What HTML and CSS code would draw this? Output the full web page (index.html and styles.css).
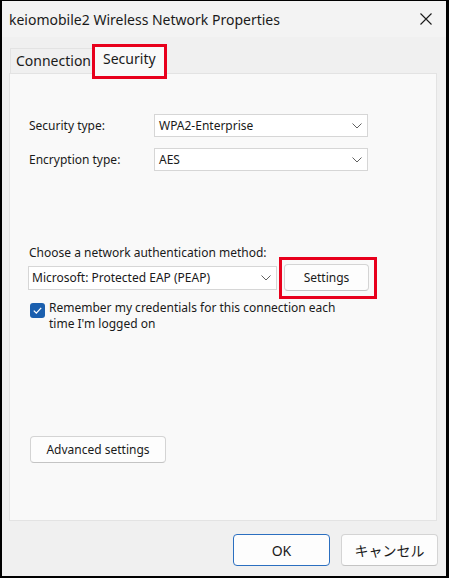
FILE: index.html
```html
<!DOCTYPE html>
<html>
<head>
<meta charset="utf-8">
<link rel="stylesheet" href="styles.css">
</head>
<body>
<div class="window">
  <div class="titlebar">
    <span class="title">keiomobile2 Wireless Network Properties</span>
    <svg class="close" width="12" height="12" viewBox="0 0 12 12"><path d="M0.5 0.5 L11.5 11.5 M11.5 0.5 L0.5 11.5" stroke="#1a1a1a" stroke-width="1.1" fill="none"/></svg>
  </div>
  <div class="tabs">
    <div class="tab">Connection</div>
    <div class="tab active">Security<span class="mark mark-tab"></span></div>
  </div>
  <div class="panel">
    <div class="row first">
      <span class="label">Security type:</span>
      <div class="select wide"><span>WPA2-Enterprise</span><svg class="chev" width="10" height="6" viewBox="0 0 10 6"><path d="M0.5 0.5 L5 5 L9.5 0.5" stroke="#606060" stroke-width="1" fill="none"/></svg></div>
    </div>
    <div class="row">
      <span class="label">Encryption type:</span>
      <div class="select wide"><span>AES</span><svg class="chev" width="10" height="6" viewBox="0 0 10 6"><path d="M0.5 0.5 L5 5 L9.5 0.5" stroke="#606060" stroke-width="1" fill="none"/></svg></div>
    </div>
    <div class="auth-label">Choose a network authentication method:</div>
    <div class="auth-row">
      <div class="select method"><span>Microsoft: Protected EAP (PEAP)</span><svg class="chev" width="10" height="6" viewBox="0 0 10 6"><path d="M0.5 0.5 L5 5 L9.5 0.5" stroke="#606060" stroke-width="1" fill="none"/></svg></div>
      <div class="btn settings">Settings<span class="mark mark-btn"></span></div>
    </div>
    <div class="check-row">
      <span class="checkbox"><svg width="15" height="15" viewBox="0 0 15 15"><path d="M3.8 7.6 L6.3 10.1 L11.2 4.9" stroke="#fff" stroke-width="1.3" fill="none"/></svg></span>
      <span class="check-text">Remember my credentials for this connection each time I'm logged on</span>
    </div>
    <div class="btn advanced">Advanced settings</div>
  </div>
  <div class="footer">
    <div class="btn dlg ok">OK</div>
    <div class="btn dlg">キャンセル</div>
  </div>
</div>
</body>
</html>
```
FILE: styles.css
```css
html, body {
  margin: 0;
  padding: 0;
  background: #000;
}
body {
  width: 449px;
  height: 578px;
  overflow: hidden;
  font-family: "Noto Sans", "Noto Sans CJK JP", sans-serif;
  font-size: 12px;
  color: #1a1a1a;
}
.window {
  margin: 1px 0 0 2px;
  width: 444px;
  height: 575px;
  background: #f0f0f0;
  display: flex;
  flex-direction: column;
}
.titlebar {
  height: 36px;
  display: flex;
  align-items: center;
  justify-content: space-between;
  padding: 0 14px 0 7px;
  background: #f3f3f3;
}
.title {
  font-size: 14px;
  color: #1a1a1a;
}
.tabs {
  height: 36px;
  display: flex;
  align-items: flex-end;
  padding-left: 8px;
}
.tab {
  position: relative;
  height: 24px;
  padding: 0 6px 0 5px;
  border: 1px solid #e3e3e3;
  border-bottom: none;
  background: #f0f0f0;
  font-size: 14px;
  line-height: 24px;
}
.tab.active {
  height: 29px;
  line-height: 27px;
  background: #f9f9f9;
  padding: 0 8px;
  margin-left: -4px;
  margin-bottom: -1px;
  z-index: 2;
}
.mark {
  position: absolute;
  border: 3px solid #e8001c;
  pointer-events: none;
}
.mark-tab {
  left: -3px;
  top: -1px;
  width: 69px;
  height: 29px;
}
.mark-btn {
  left: -6px;
  top: -8px;
  width: 92px;
  height: 36px;
}
.panel {
  margin: 0 9px 0 7px;
  height: 446px;
  background: #f9f9f9;
  border: 1px solid #e3e3e3;
  padding: 0 0 0 19px;
  display: flex;
  flex-direction: column;
}
.row {
  display: flex;
  align-items: center;
  margin-top: 11px;
}
.row.first {
  margin-top: 40px;
}
.label {
  width: 125px;
}
.select {
  height: 21px;
  border: 1px solid #d6d6d6;
  background: #fff;
  display: flex;
  align-items: center;
  justify-content: space-between;
  padding: 0 5px 0 4px;
}
.select.wide {
  width: 203px;
}
.auth-label {
  margin-top: 74px;
  height: 16px;
  line-height: 16px;
}
.auth-row {
  display: flex;
  align-items: center;
  margin-top: 3px;
  margin-left: -1px;
}
.select.method {
  width: 239px;
  height: 22px;
  padding: 0 5px 0 3px;
}
.btn {
  position: relative;
  background: #fdfdfd;
  border: 1px solid #d4d4d4;
  border-bottom-color: #c4c4c4;
  border-radius: 4px;
  display: flex;
  align-items: center;
  justify-content: center;
}
.settings {
  margin-left: 7px;
  width: 83px;
  height: 25px;
}
.check-row {
  display: flex;
  align-items: flex-start;
  margin-top: 12px;
  margin-left: 1px;
}
.checkbox {
  width: 15px;
  height: 15px;
  border-radius: 3px;
  background: #1b5fae;
  flex: none;
}
.checkbox svg {
  display: block;
}
.check-text {
  width: 300px;
  margin-left: 4px;
  line-height: 16px;
  margin-top: -3px;
}
.advanced {
  margin-top: 104px;
  margin-left: 1px;
  width: 134px;
  height: 25px;
}
.footer {
  display: flex;
  justify-content: flex-end;
  gap: 11px;
  padding: 13px 8px 0 0;
}
.dlg {
  width: 95px;
  height: 30px;
  font-size: 14px;
}
.ok {
  border: 1px solid #2b6fc0;
}
```
